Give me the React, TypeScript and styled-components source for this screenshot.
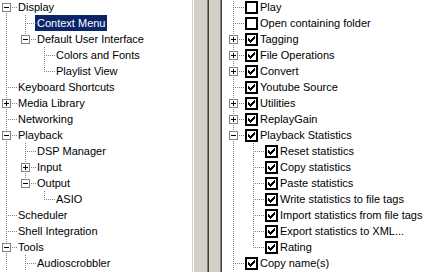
import React from 'react';
import styled, { createGlobalStyle } from 'styled-components';

type Conn = 'first' | 'mid' | 'last';

type TreeNode = {
  label: string;
  rails: string;
  conn: Conn;
  exp?: '+' | '-';
  checked?: boolean;
  selected?: boolean;
};

const pages: TreeNode[] = [
  { label: 'Display', rails: '', conn: 'first', exp: '-' },
  { label: 'Context Menu', rails: '|', conn: 'mid', selected: true },
  { label: 'Default User Interface', rails: '|', conn: 'last', exp: '-' },
  { label: 'Colors and Fonts', rails: '| ', conn: 'mid' },
  { label: 'Playlist View', rails: '| ', conn: 'last' },
  { label: 'Keyboard Shortcuts', rails: '', conn: 'mid' },
  { label: 'Media Library', rails: '', conn: 'mid', exp: '+' },
  { label: 'Networking', rails: '', conn: 'mid' },
  { label: 'Playback', rails: '', conn: 'mid', exp: '-' },
  { label: 'DSP Manager', rails: '|', conn: 'mid' },
  { label: 'Input', rails: '|', conn: 'mid', exp: '+' },
  { label: 'Output', rails: '|', conn: 'last', exp: '-' },
  { label: 'ASIO', rails: '| ', conn: 'last' },
  { label: 'Scheduler', rails: '', conn: 'mid' },
  { label: 'Shell Integration', rails: '', conn: 'mid' },
  { label: 'Tools', rails: '', conn: 'mid', exp: '-' },
  { label: 'Audioscrobbler', rails: '|', conn: 'mid' },
];

const commands: TreeNode[] = [
  { label: 'Play', rails: '', conn: 'mid', checked: false },
  { label: 'Open containing folder', rails: '', conn: 'mid', checked: false },
  { label: 'Tagging', rails: '', conn: 'mid', exp: '+', checked: true },
  { label: 'File Operations', rails: '', conn: 'mid', exp: '+', checked: true },
  { label: 'Convert', rails: '', conn: 'mid', exp: '+', checked: true },
  { label: 'Youtube Source', rails: '', conn: 'mid', checked: true },
  { label: 'Utilities', rails: '', conn: 'mid', exp: '+', checked: true },
  { label: 'ReplayGain', rails: '', conn: 'mid', exp: '+', checked: true },
  { label: 'Playback Statistics', rails: '', conn: 'mid', exp: '-', checked: true },
  { label: 'Reset statistics', rails: '|', conn: 'mid', checked: true },
  { label: 'Copy statistics', rails: '|', conn: 'mid', checked: true },
  { label: 'Paste statistics', rails: '|', conn: 'mid', checked: true },
  { label: 'Write statistics to file tags', rails: '|', conn: 'mid', checked: true },
  { label: 'Import statistics from file tags', rails: '|', conn: 'mid', checked: true },
  { label: 'Export statistics to XML...', rails: '|', conn: 'mid', checked: true },
  { label: 'Rating', rails: '|', conn: 'last', checked: true },
  { label: 'Copy name(s)', rails: '', conn: 'mid', checked: true },
];

const GlobalStyle = createGlobalStyle`
  html, body {
    margin: 0;
    padding: 0;
    background: #fff;
  }
  body {
    overflow: hidden;
  }
`;

const dotsDown = 'linear-gradient(to bottom, #808080 50%, transparent 50%)';
const dotsRight = 'linear-gradient(to right, #808080 50%, transparent 50%)';

const Window = styled.div`
  display: flex;
  width: 441px;
  height: 272px;
  overflow: hidden;
  font-family: 'Liberation Sans', Arial, sans-serif;
  font-size: 11px;
  color: #000;
  background: #d4d0c8;
`;

const PagesPane = styled.div`
  flex: none;
  width: 194px;
  height: 100%;
  overflow: hidden;
  background: #fff;
  box-shadow: inset -1px 0 #fff, inset -2px 0 #d4d0c8;
`;

const Splitter = styled.div`
  flex: none;
  width: 13px;
  background: #d4d0c8;
`;

const PageFrame = styled.div`
  flex: 1;
  display: flex;
  min-width: 0;
  padding-left: 12px;
  border-left: 1px solid #808080;
  box-shadow: inset 1px 0 #404040;
  background: #d4d0c8;
`;

const CommandsPane = styled.div`
  flex: 1;
  min-width: 0;
  overflow: hidden;
  background: #fff;
  border-left: 1px solid #808080;
  box-shadow: inset 1px 0 #404040;
  padding-left: 1px;
`;

const TreeList = styled.div<{ $shift: number }>`
  display: flex;
  flex-direction: column;
  margin-top: -1px;
  margin-left: ${(p) => p.$shift}px;
`;

const Row = styled.div`
  display: flex;
  align-items: flex-start;
  height: 16px;
  flex: none;
`;

const Rail = styled.span<{ $w: number; $x: number; $on: boolean }>`
  flex: none;
  width: ${(p) => p.$w}px;
  height: 16px;
  background-image: ${(p) => (p.$on ? dotsDown : 'none')};
  background-size: 1px 2px;
  background-position: ${(p) => p.$x}px 0;
  background-repeat: repeat-y;
`;

const Connector = styled.span<{ $w: number; $x: number; $conn: Conn }>`
  flex: none;
  position: relative;
  width: ${(p) => p.$w}px;
  height: 16px;

  &::before {
    content: '';
    position: absolute;
    left: ${(p) => p.$x}px;
    width: 1px;
    top: ${(p) => (p.$conn === 'first' ? 8 : 0)}px;
    height: ${(p) => (p.$conn === 'mid' ? 16 : p.$conn === 'first' ? 8 : 9)}px;
    background: ${dotsDown} 0 0 / 1px 2px repeat-y;
  }

  &::after {
    content: '';
    position: absolute;
    left: ${(p) => p.$x + 2}px;
    right: -1px;
    top: 8px;
    height: 1px;
    background: ${dotsRight} 0 0 / 2px 1px repeat-x;
  }
`;

const Expander = styled.span<{ $x: number; $open: boolean }>`
  position: absolute;
  z-index: 1;
  left: ${(p) => p.$x - 4}px;
  top: 4px;
  width: 9px;
  height: 9px;
  box-sizing: border-box;
  border: 1px solid #808080;
  background: #fff;

  &::before {
    content: '';
    position: absolute;
    left: 1px;
    top: 3px;
    width: 5px;
    height: 1px;
    background: #000;
  }

  &::after {
    content: '';
    display: ${(p) => (p.$open ? 'none' : 'block')};
    position: absolute;
    left: 3px;
    top: 1px;
    width: 1px;
    height: 5px;
    background: #000;
  }
`;

const CheckBox = styled.span`
  flex: none;
  position: relative;
  z-index: 1;
  display: flex;
  align-items: center;
  justify-content: center;
  width: 13px;
  height: 13px;
  margin: 2px 0 0 2px;
  box-sizing: border-box;
  border: 2px solid #000;
  background: #fff;
`;

const Label = styled.span<{ $selected?: boolean }>`
  flex: none;
  height: 16px;
  line-height: 16px;
  padding: 0 2px;
  white-space: nowrap;
  color: ${(p) => (p.$selected ? '#fff' : '#000')};
  background: ${(p) => (p.$selected ? '#0a246a' : 'transparent')};
`;

const CheckMark = () => (
  <svg width="7" height="7" viewBox="0 0 7 7" shapeRendering="crispEdges">
    {[2, 3, 4, 3, 2, 1, 0].map((y, x) => (
      <rect key={x} x={x} y={y} width="1" height="3" fill="#000" />
    ))}
  </svg>
);

type TreeProps = {
  nodes: TreeNode[];
  indent: number;
  lineX: number;
  shift: number;
  checks?: boolean;
};

const Tree = ({ nodes, indent, lineX, shift, checks }: TreeProps) => (
  <TreeList $shift={shift}>
    {nodes.map((node, i) => (
      <Row key={i}>
        {node.rails.split('').map((r, k) => (
          <Rail key={k} $w={indent} $x={lineX} $on={r === '|'} />
        ))}
        <Connector $w={indent} $x={lineX} $conn={node.conn}>
          {node.exp && <Expander $x={lineX} $open={node.exp === '-'} />}
        </Connector>
        {checks && <CheckBox>{node.checked && <CheckMark />}</CheckBox>}
        <Label $selected={node.selected}>{node.label}</Label>
      </Row>
    ))}
  </TreeList>
);

const App = () => {
  return (
    <>
      <GlobalStyle />
      <Window>
        <PagesPane>
          <Tree nodes={pages} indent={19} lineX={9} shift={-3} />
        </PagesPane>
        <Splitter />
        <PageFrame>
          <CommandsPane>
            <Tree nodes={commands} indent={20} lineX={10} shift={1} checks />
          </CommandsPane>
        </PageFrame>
      </Window>
    </>
  );
};

export default App;
